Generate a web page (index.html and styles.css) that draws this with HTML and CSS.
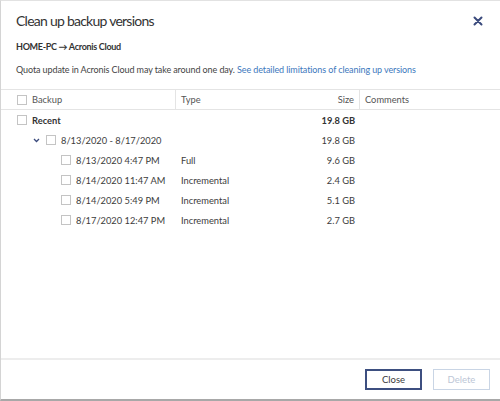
FILE: index.html
```html
<!DOCTYPE html>
<html>
<head>
<meta charset="utf-8">
<link rel="stylesheet" href="styles.css">
</head>
<body>
<div class="dialog">
  <div class="head">
    <h1 class="title">Clean up backup versions</h1>
    <svg class="close-x" width="10" height="10" viewBox="0 0 10 10"><path d="M1.5 1.5 L8.5 8.5 M8.5 1.5 L1.5 8.5" stroke="#3a4a7c" stroke-width="2" stroke-linecap="round"/></svg>
  </div>
  <div class="route">HOME-PC → Acronis Cloud</div>
  <div class="note">Quota update in Acronis Cloud may take around one day. <a class="link">See detailed limitations of cleaning up versions</a></div>
  <div class="table">
    <div class="row header">
      <div class="cell c-backup"><span class="cb"></span>Backup</div>
      <div class="cell c-type">Type</div>
      <div class="cell c-size">Size</div>
      <div class="cell c-comments">Comments</div>
    </div>
    <div class="row bold">
      <div class="cell c-backup"><span class="cb"></span>Recent</div>
      <div class="cell c-type"></div>
      <div class="cell c-size">19.8 GB</div>
      <div class="cell c-comments"></div>
    </div>
    <div class="row">
      <div class="cell c-backup lvl1"><svg class="chev" width="7" height="5" viewBox="0 0 7 5"><path d="M1 1 L3.5 3.5 L6 1" fill="none" stroke="#3a4a7c" stroke-width="1.3"/></svg><span class="cb"></span>8/13/2020 - 8/17/2020</div>
      <div class="cell c-type"></div>
      <div class="cell c-size">19.8 GB</div>
      <div class="cell c-comments"></div>
    </div>
    <div class="row">
      <div class="cell c-backup lvl2"><span class="cb"></span>8/13/2020 4:47 PM</div>
      <div class="cell c-type">Full</div>
      <div class="cell c-size">9.6 GB</div>
      <div class="cell c-comments"></div>
    </div>
    <div class="row">
      <div class="cell c-backup lvl2"><span class="cb"></span>8/14/2020 11:47 AM</div>
      <div class="cell c-type">Incremental</div>
      <div class="cell c-size">2.4 GB</div>
      <div class="cell c-comments"></div>
    </div>
    <div class="row">
      <div class="cell c-backup lvl2"><span class="cb"></span>8/14/2020 5:49 PM</div>
      <div class="cell c-type">Incremental</div>
      <div class="cell c-size">5.1 GB</div>
      <div class="cell c-comments"></div>
    </div>
    <div class="row">
      <div class="cell c-backup lvl2"><span class="cb"></span>8/17/2020 12:47 PM</div>
      <div class="cell c-type">Incremental</div>
      <div class="cell c-size">2.7 GB</div>
      <div class="cell c-comments"></div>
    </div>
  </div>
  <div class="footer">
    <button class="btn primary">Close</button>
    <button class="btn disabled">Delete</button>
  </div>
</div>
</body>
</html>
```

FILE: styles.css
```css
html, body {
  margin: 0;
  padding: 0;
  background: #ffffff;
}
body {
  font-family: Lato, "Open Sans", sans-serif;
  color: #3c3c3c;
}
.dialog {
  width: 500px;
  height: 401px;
  box-sizing: border-box;
  border-left: 1px solid #d4d4d4;
  border-top: 1px solid #e2e2e2;
  border-bottom: 2px solid #a8a8a8;
  display: flex;
  flex-direction: column;
}
.head {
  display: flex;
  align-items: center;
  justify-content: space-between;
  padding: 8px 17px 0 15px;
  height: 23px;
}
.title {
  margin: 0;
  font-weight: 400;
  font-size: 14px;
  letter-spacing: -0.75px;
  line-height: 23px;
  color: #333;
}
.close-x {
  display: block;
}
.route {
  margin: 8px 0 0 15px;
  font-size: 9px;
  font-weight: 700;
  letter-spacing: -0.3px;
  line-height: 14px;
  color: #333;
}
.note {
  margin: 9px 0 0 15px;
  font-size: 9px;
  letter-spacing: -0.1px;
  line-height: 14px;
  color: #444;
}
.link {
  color: #3d78bd;
}
.table {
  margin-top: 12px;
  border-top: 1px solid #e4e4e4;
}
.row {
  display: grid;
  grid-template-columns: 175px 120px 64px 1fr;
  height: 20px;
  align-items: center;
  font-size: 9.3px;
  color: #3c3c3c;
}
.row.header {
  height: 19px;
  border-bottom: 1px solid #e4e4e4;
  color: #555;
}
.row.bold {
  font-weight: 700;
  color: #333;
}
.cell {
  height: 100%;
  display: flex;
  align-items: center;
  white-space: nowrap;
  box-sizing: border-box;
}
.c-backup {
  padding-left: 16px;
}
.c-backup.lvl1 {
  padding-left: 32px;
}
.c-backup.lvl2 {
  padding-left: 60px;
}
.c-type {
  padding-left: 5px;
}
.c-size {
  justify-content: flex-end;
  padding-right: 5px;
}
.c-comments {
  padding-left: 5px;
}
.header .c-backup,
.header .c-size {
  border-right: 1px solid #e4e4e4;
}
.cb {
  width: 8px;
  height: 8px;
  border: 1px solid #c4c4c4;
  background: #fff;
  margin-right: 5px;
  flex: none;
}
.chev {
  margin-right: 6px;
  flex: none;
}
.footer {
  margin-top: auto;
  border-top: 2px solid #ededed;
  height: 39px;
  display: flex;
  justify-content: flex-end;
  align-items: center;
  gap: 11px;
  padding-right: 10px;
}
.btn {
  width: 57px;
  height: 21px;
  font-family: Lato, "Open Sans", sans-serif;
  font-size: 9.5px;
  background: #fff;
  padding: 0;
}
.btn.primary {
  border: 1px solid #3d4f80;
  box-shadow: inset 0 0 0 1px #3d4f80;
  color: #3a3a3a;
}
.btn.disabled {
  border: 1px solid #c9d5e5;
  color: #bcc6d6;
}
```
